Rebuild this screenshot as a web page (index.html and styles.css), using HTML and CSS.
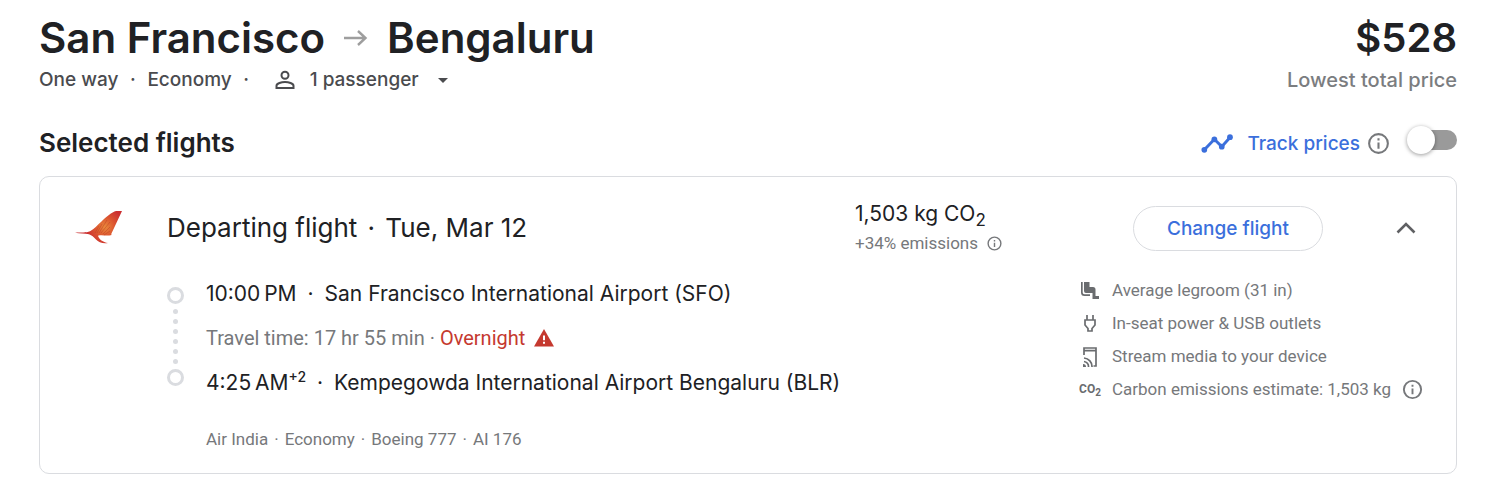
FILE: index.html
```html
<!DOCTYPE html>
<html lang="en">
<head>
<meta charset="utf-8">
<meta name="viewport" content="width=device-width, initial-scale=1">
<title>San Francisco to Bengaluru</title>
<link rel="stylesheet" href="styles.css">
</head>
<body>
<svg class="defs" width="0" height="0" aria-hidden="true">
  <symbol id="info" viewBox="0 0 24 24"><path fill="currentColor" d="M11 7h2v2h-2zm0 4h2v6h-2zm1-9a10 10 0 1 0 0 20 10 10 0 0 0 0-20zm0 18a8 8 0 1 1 0-16 8 8 0 0 1 0 16z"/></symbol>
</svg>
<main class="page">
  <header class="trip">
    <div class="trip-main">
      <h1 class="route">
        <span>San Francisco</span>
        <svg class="route-arrow" viewBox="0 0 24 18" role="img" aria-label="to"><path d="M0 9h21M14 2l7.500 7-7.500 7" fill="none" stroke="#9e9e9e" stroke-width="2.400"/></svg>
        <span>Bengaluru</span>
      </h1>
      <div class="options">
        <span>One way</span><span class="sep">·</span><span>Economy</span><span class="sep">·</span>
        <button class="passengers" type="button">
          <svg class="person" viewBox="0 0 20 20" aria-hidden="true"><g fill="none" stroke="currentColor" stroke-width="2"><circle cx="10" cy="5.200" r="3.500"/><path d="M1.500 18v-2.200c0-2.400 5-3.800 8.500-3.800s8.500 1.400 8.500 3.800V18z"/></g></svg>
          <span>1 passenger</span>
          <svg class="caret" viewBox="0 0 10 5" aria-hidden="true"><path d="M0 0h10L5 5z" fill="currentColor"/></svg>
        </button>
      </div>
    </div>
    <div class="price">
      <div class="amount">$528</div>
      <div class="price-note">Lowest total price</div>
    </div>
  </header>

  <section>
    <div class="section-head">
      <h2 class="section-title">Selected flights</h2>
      <div class="track">
        <svg class="trend" viewBox="0 0 30 18" aria-hidden="true"><g fill="#3b6fdc"><path d="M3 15L12.500 5l7 7L27.500 3" fill="none" stroke="#3b6fdc" stroke-width="2.800"/><circle cx="3" cy="15" r="2.700"/><circle cx="12.500" cy="5" r="2.700"/><circle cx="19.500" cy="12" r="2.700"/><circle cx="27.300" cy="3" r="2.700"/></g></svg>
        <label class="track-label" for="track">Track prices</label>
        <svg class="info-large" aria-hidden="true"><use href="#info"/></svg>
        <input class="switch" id="track" type="checkbox" role="switch">
      </div>
    </div>

    <article class="card">
      <div class="card-head">
        <svg class="airline" viewBox="0 0 48 34" role="img" aria-label="Air India">
          <defs><radialGradient id="wing" gradientUnits="userSpaceOnUse" cx="30" cy="16" r="19"><stop offset="0" stop-color="#ea8a3c"/><stop offset=".5" stop-color="#dc5630"/><stop offset="1" stop-color="#cb2f30"/></radialGradient></defs>
          <path fill="url(#wing)" d="M47 0L36 23.500c2 .1 0 .9-2.500 1-4 .1-7.500-.8-10.500.2 1 3.500 5 6.500 10 7.300-5 1-9.500-.8-12-3.500-2.500-2.500-4-4-7-5.200C9.500 22.300 5 22.500 0 21.700c6-.7 11 .4 15-1.500 4.500-2.200 7-6 11.500-9.700C31 6 37 1 41 0z"/>
          <path d="M20 22l4-7M22 22l5-9M24 22l8-13M26 22l9-11M28 23l7-7M29 24l6-4" stroke="#b83a22" stroke-width=".6" opacity=".7"/>
        </svg>
        <h3 class="leg-title"><span>Departing flight</span><span class="point-sep">·</span><span>Tue, Mar 12</span></h3>
        <div class="emissions">
          <div class="emissions-total">1,503 kg CO<sub>2</sub></div>
          <div class="emissions-diff">+34% emissions <svg class="info-small" aria-hidden="true"><use href="#info"/></svg></div>
        </div>
        <button class="change" type="button">Change flight</button>
        <button class="collapse" type="button" aria-label="Collapse flight details"><svg class="chevron" viewBox="0 0 20 12" aria-hidden="true"><path d="M1.500 10.500L10 2l8.500 8.500" fill="none" stroke="currentColor" stroke-width="2.600"/></svg></button>
      </div>
      <div class="card-body">
        <div class="timeline" aria-hidden="true">
          <i class="stop"></i><i class="dot"></i><i class="dot"></i><i class="dot"></i><i class="dot"></i><i class="dot"></i><i class="dot"></i><i class="stop"></i>
        </div>
        <div class="itinerary">
          <div class="point"><span>10:00&#8201;PM</span><span class="point-sep">·</span><span>San Francisco International Airport (SFO)</span></div>
          <div class="duration"><span>Travel time: 17 hr 55 min · <span class="overnight">Overnight</span></span>
            <svg class="warning" viewBox="0 0 20 18" aria-hidden="true"><path fill="#c5392f" d="M10 0l10 17.500H0z"/><path fill="#fff" d="M9 6.500h2v4.700H9zM9 12.800h2v2H9z"/></svg></div>
          <div class="point"><span>4:25&#8201;AM<sup>+2</sup></span><span class="point-sep">·</span><span>Kempegowda International Airport Bengaluru (BLR)</span></div>
          <div class="aircraft"><span>Air India</span><span>·</span><span>Economy</span><span>·</span><span>Boeing 777</span><span>·</span><span>AI 176</span></div>
        </div>
        <ul class="amenities">
          <li><span class="amenity-icon"><svg width="18" height="17" viewBox="0 0 18 17"><path fill="currentColor" d="M0 0h1.700v10.500a1.800 1.800 0 0 0 1.800 1.800H9V14H3.500A3.500 3.500 0 0 1 0 10.500zM3 0h5.500v5H12a2.500 2.500 0 0 1 2.500 2.500v6.500H18V17h-6.500v-6H5a2 2 0 0 1-2-2z"/></svg></span>Average legroom (31 in)</li>
          <li><span class="amenity-icon"><svg width="12" height="17" viewBox="0 0 12 17"><path d="M3 0v5M9 0v5M1 5h10v5l-3 3.500V16H4v-2.500L1 10z" fill="none" stroke="currentColor" stroke-width="1.700"/></svg></span>In-seat power &amp; USB outlets</li>
          <li><span class="amenity-icon"><svg width="14" height="20" viewBox="0 0 14 20"><g fill="none" stroke="currentColor" stroke-width="1.700"><path d="M1 8V1h12v18h-2.500M1 3.700h12M1 11a8.500 8.500 0 0 1 8 9M1 14.500A5 5 0 0 1 5.500 20"/></g><path fill="currentColor" d="M0 17a3 3 0 0 1 3 3H0z"/></svg></span>Stream media to your device</li>
          <li><span class="amenity-icon co2">CO<sub>2</sub></span>Carbon emissions estimate: 1,503 kg<svg class="info-medium" aria-hidden="true"><use href="#info"/></svg></li>
        </ul>
      </div>
    </article>
  </section>
</main>
</body>
</html>
```
FILE: styles.css
```css
* { box-sizing: border-box; }
body { margin: 0; background: #fff; color: #202124; font-family: Inter, "Open Sans", sans-serif; }
h1, h2, h3, ul { margin: 0; padding: 0; font-weight: 600; }
button { font: inherit; color: inherit; background: none; border: 0; padding: 0; cursor: pointer; }
svg { display: block; flex: none; }
.defs { position: absolute; }

.page { padding: 14px 43px 22px 39px; }
.trip { display: flex; justify-content: space-between; }
.route { display: flex; align-items: center; font-size: 42px; line-height: 48px; }
.route-arrow { width: 24px; height: 18px; margin: 0 19px; }
.options { display: flex; align-items: center; font-size: 19px; line-height: 36px; font-weight: 500; color: #4a4b4e; }
.sep { width: 29px; text-align: center; }
.passengers { display: flex; align-items: center; margin-left: 14px; }
.person { width: 20px; height: 20px; margin-right: 15px; }
.caret { width: 10px; height: 5px; margin-left: 19px; }
.price { text-align: right; font-weight: 500; }
.amount { font-size: 40px; line-height: 48px; font-weight: 600; }
.price-note { font-size: 20px; line-height: 36px; color: #7b7d80; }

.section-head { display: flex; justify-content: space-between; align-items: center; height: 40px; margin: 25px 0 13px; }
.section-title { font-size: 26px; line-height: 40px; }
.track { display: flex; align-items: center; }
.trend { width: 32px; height: 19px; margin-right: 14px; }
.track-label { font-size: 19px; font-weight: 500; color: #3b6fdc; }
.info-large { width: 25px; height: 25px; margin: 0 16px 0 6px; color: #76787b; }
.switch { appearance: none; display: flex; align-items: center; width: 50px; height: 28px; margin: 0 0 6px; cursor: pointer; }
.switch::before { content: ""; width: 28px; height: 28px; border-radius: 50%; background: #fff; box-shadow: 0 1px 4px rgba(0, 0, 0, .4); z-index: 1; }
.switch::after { content: ""; width: 38px; height: 20px; margin-left: -16px; border-radius: 10px; background: #9a9a9a; }

.card { border: 1px solid #dadce0; border-radius: 10px; padding: 22px 0; }
.card-head { display: grid; grid-template-columns: 127px 1fr 278px 190px 133px; align-items: center; }
.airline { width: 48px; height: 34px; margin-left: 35px; }
.leg-title { display: flex; font-size: 26px; line-height: 40px; font-weight: 400; }
.emissions-total { font-size: 21px; line-height: 30px; }
.emissions-total sub { font-size: 17px; line-height: 0; }
.emissions-diff { display: flex; align-items: center; gap: 8px; font: 17px/28px Roboto, sans-serif; color: #76787b; }
.info-small { width: 17px; height: 17px; }
.change { height: 45px; border: 1px solid #dadce0; border-radius: 23px; color: #3b6fdc; font-size: 19px; font-weight: 500; }
.collapse { display: grid; place-items: center; width: 44px; height: 44px; margin-left: 61px; color: #5f6063; }
.chevron { width: 20px; height: 12px; }

.card-body { display: flex; margin-top: 14px; }
.timeline { display: flex; flex-direction: column; align-items: center; justify-content: space-between; width: 17px; height: 99px; margin: 16px 22px 0 127px; }
.stop { width: 17px; height: 17px; border: 3px solid #dadce0; border-radius: 50%; }
.dot { width: 5px; height: 5px; border-radius: 50%; background: #dadce0; }
.itinerary { flex: 1; }
.point { display: flex; align-items: center; font-size: 21px; line-height: 45px; white-space: nowrap; }
.point-sep { width: 28px; text-align: center; }
.point sup { font-size: 14px; line-height: 0; font-weight: 500; }
.duration { display: flex; align-items: center; gap: 9px; font: 20px/44px Roboto, sans-serif; color: #76787b; }
.overnight { color: #c5392f; }
.warning { width: 20px; height: 18px; }
.aircraft { display: flex; gap: 6px; margin-top: 22px; font: 17px/24px Roboto, sans-serif; color: #76787b; }
.amenities { width: 378px; padding-top: 3px; list-style: none; font: 17px/33px Roboto, sans-serif; color: #76787b; }
.amenities li { display: flex; align-items: center; white-space: nowrap; }
.amenity-icon { display: flex; justify-content: center; width: 24px; margin-right: 10px; color: #6a6c6f; }
.co2 { display: block; font-size: 12px; font-weight: 700; text-align: center; }
.co2 sub { font-size: 10px; line-height: 0; }
.info-medium { width: 23px; height: 23px; margin-left: 10px; }
```
